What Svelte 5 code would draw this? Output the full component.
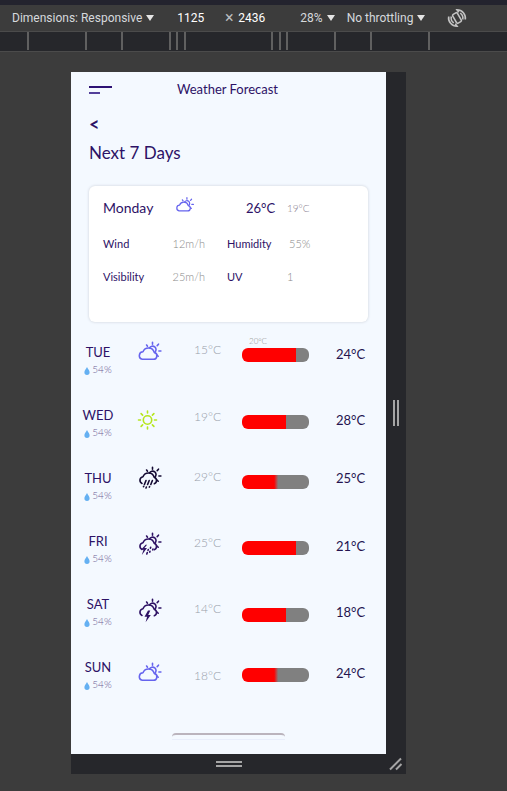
<script>
  const ticks = [27, 85, 121, 169, 176, 184, 271, 279, 286, 334, 370, 428];

  const days = [
    { name: 'TUE', rain: '54%', icon: 'cloud', low: '15°C', high: '24°C', fill: 81, soft: 0, note: '20°C' },
    { name: 'WED', rain: '54%', icon: 'sun', low: '19°C', high: '28°C', fill: 65, soft: 0 },
    { name: 'THU', rain: '54%', icon: 'rain', low: '29°C', high: '25°C', fill: 48, soft: 6 },
    { name: 'FRI', rain: '54%', icon: 'storm', low: '25°C', high: '21°C', fill: 81, soft: 0 },
    { name: 'SAT', rain: '54%', icon: 'bolt', low: '14°C', high: '18°C', fill: 65, soft: 0 },
    { name: 'SUN', rain: '54%', icon: 'cloud', low: '18°C', high: '24°C', fill: 48, soft: 6 }
  ];
</script>

{#snippet weather(kind)}
  <svg class="weather {kind}" viewBox="0 0 26 26" aria-hidden="true">
    {#if kind === 'sun'}
      <circle cx="10.5" cy="13" r="4.2" />
      <path d="M10.5 4v2M10.5 20v2M1.5 13h2M17.5 13h2M4.1 6.6l1.5 1.5M15.4 17.9l1.5 1.5M4.1 19.4l1.5-1.5M15.4 8.1l1.5-1.5" />
    {:else}
      <path d="M15.5 2.2v2M9.6 5l.9 1.2M20.2 5.6l1.3-1.4M21.9 11h2M20.2 15.2l1 1" />
      <path d="M12.5 7.9a3.5 3.5 0 1 1 5.3 4.4" />
      {#if kind === 'cloud'}
        <path d="M5.3 19.3H16.2a3.5 3.5 0 0 0 1-6.9a5.9 5.9 0 0 0-11.2-.6a3.8 3.8 0 0 0-.7 7.5z" />
      {:else}
        <path d="M5 18.5a3.6 3.6 0 0 1 1-6.8a5.9 5.9 0 0 1 11.2.6a3.4 3.4 0 0 1 .1 6.4" />
        {#if kind === 'rain'}
          <path d="M9 15.5l-1.6 4M12.2 15.5l-1.6 4M15.4 15.5l-1.6 4M9.4 22l-.4 1M6.7 21.3l-.2.4M12.6 21.6l-.3.5" />
        {:else if kind === 'storm'}
          <path class="solid" d="M8.6 13.700l-4.600 5h2.500l-1.700 5.300 5.200-7H7.400l2.700-3.300z" />
          <path d="M11.3 18.5l-.3.8M10.3 21.6l-.5 1.4M13.7 16.3l-.3.8M13 20.3l-.3.8M16 18l-.3.8" />
        {:else}
          <path class="solid" d="M11 13.500l-3.500 6.300h2.600l-1.500 5.500 5.200-7.300h-2.600l2.100-4.500z" />
        {/if}
      {/if}
    {/if}
  </svg>
{/snippet}

<div class="devtools">
  <header class="toolbar">
    <button class="dim">Dimensions: Responsive<i class="caret"></i></button>
    <input class="size first" aria-label="Width" value="1125" />
    <span class="times">×</span>
    <input class="size" aria-label="Height" value="2436" />
    <button class="zoom">28%<i class="caret"></i></button>
    <button class="throttle">No throttling<i class="caret"></i></button>
    <button class="rotate" aria-label="Rotate">
      <svg viewBox="0 0 20 20" width="20" height="20">
        <g fill="none" stroke="currentColor" stroke-width="1.6">
          <rect x="7.3" y="5" width="5.4" height="10" rx="1.2" transform="rotate(-30 10 10)" />
          <path d="M1.7 8.5a8.5 8.5 0 0 0 8.3 9.8l-1.8-2.5M18.3 11.5A8.5 8.5 0 0 0 10 1.7l1.8 2.5M4.3 8.5a6 6 0 0 0 2.5 6.4M15.7 11.5a6 6 0 0 0-2.5-6.4" />
        </g>
      </svg>
    </button>
  </header>
  <svg class="ruler" height="21" aria-hidden="true">
    {#each ticks as x}
      <rect {x} y="0" width="2" height="18" />
    {/each}
  </svg>

  <main class="stage">
    <div class="frame">
      <div class="phone">
        <div class="bar-top">
          <button class="menu" aria-label="Menu"><span></span><span></span></button>
          <h1>Weather Forecast</h1>
        </div>
        <a class="back" href="#back" aria-label="Back">&lt;</a>
        <h2>Next 7 Days</h2>

        <section class="card">
          <div class="today">
            <strong>Monday</strong>
            {@render weather('cloud')}
            <strong class="max">26°C</strong>
            <span class="min">19°C</span>
          </div>
          <dl>
            <dt>Wind</dt><dd class="right">12m/h</dd>
            <dt>Humidity</dt><dd class="pct">55%</dd>
            <dt>Visibility</dt><dd class="right">25m/h</dd>
            <dt>UV</dt><dd>1</dd>
          </dl>
        </section>

        <section class="week">
          <div class="names">
            {#each days as d}
              <div class="day">
                <b>{d.name}</b>
                <span class="wet">
                  <svg viewBox="0 0 6 8" width="6" height="8"><path d="M3 0C4 2 5.6 3.6 5.6 5.3a2.6 2.6 0 0 1-5.2 0C.4 3.6 2 2 3 0z" fill="#64b0f2" /></svg>{d.rain}
                </span>
              </div>
            {/each}
          </div>
          <div class="column icons">
            {#each days as d}{@render weather(d.icon)}{/each}
          </div>
          <div class="column lows">
            {#each days as d}<span>{d.low}</span>{/each}
          </div>
          <div class="column bars">
            {#each days as d}
              <div>
                {#if d.note}<small>{d.note}</small>{/if}
                <div class="bar" style="--from: {d.fill}%; --to: {d.fill + d.soft}%"></div>
              </div>
            {/each}
          </div>
          <div class="column highs">
            {#each days as d}<span>{d.high}</span>{/each}
          </div>
        </section>

        <div class="sheet"></div>
      </div>
      <div class="grip side"><i></i><i></i></div>
      <div class="grip bottom"><i></i><i></i></div>
      <div class="corner">
        <svg viewBox="0 0 14 14" width="14" height="14"><path d="M1 12.500L12 1.500M7 12.500L12.500 7" stroke="#a5a5a5" stroke-width="2" fill="none" /></svg>
      </div>
    </div>
  </main>
</div>

<style>
  :global(body) { margin: 0; background: #3c3c3c; }
  * { box-sizing: border-box; }
  button, input { font: inherit; color: inherit; background: none; border: 0; padding: 0; margin: 0; }

  .devtools { min-height: 100vh; background: #3c3c3c; border-top: 5px solid #23232e; }
  .toolbar {
    display: flex; align-items: center; height: 26px; padding-left: 12px;
    font: 12px/16px Roboto, sans-serif; color: #d6d9dc; white-space: nowrap;
  }
  .toolbar button { display: flex; align-items: center; gap: 4px; }
  .caret { border: 4px solid transparent; border-top: 6px solid #e4e4e4; border-bottom: 0; }
  .size { width: 36px; color: #fff; }
  .first { margin-left: 23px; }
  .times { width: 12px; margin: 0 3px 0 10px; font-size: 16px; text-align: center; color: #b9bcbf; }
  .zoom { margin-left: 26px; }
  .throttle { margin-left: 12px; }
  .rotate { margin-left: 22px; color: #c4c4c4; }
  .ruler { display: block; width: 100%; background: #26272b; border-top: 1px solid #4b4b4b; border-bottom: 1px solid #4b4b4b; }
  .ruler rect { fill: #606060; }

  .stage { padding: 20px 101px 17px 71px; }
  .frame {
    display: grid; grid-template-columns: 1fr 20px; grid-template-rows: auto 20px;
    background: #26272b;
  }
  .phone {
    display: flex; flex-direction: column; padding: 8px 18px 14px;
    background: #f4f9ff; color: #2d1266; font: 300 13px/18px Lato, sans-serif;
  }
  .grip { display: flex; align-items: center; justify-content: center; gap: 2px; }
  .side i { width: 2px; height: 26px; background: #a5a5a5; }
  .bottom { flex-direction: column; }
  .bottom i { width: 26px; height: 2px; background: #a5a5a5; }
  .corner { display: flex; align-items: center; justify-content: center; }

  .bar-top { display: flex; align-items: center; justify-content: space-between; }
  .menu { display: flex; flex-direction: column; gap: 4px; padding-top: 2px; }
  .menu span { width: 23px; height: 2px; background: #53409a; }
  .menu span:first-child { background: #2e1274; }
  .menu span + span { width: 11px; }
  h1, h2 { margin: 0; font-weight: 400; }
  h1 { flex: 1; margin-left: 65px; font-size: 13px; line-height: 18px; }
  .back { align-self: flex-start; margin-top: 16px; font-size: 18px; line-height: 20px; font-weight: 700; color: inherit; text-decoration: none; }
  h2 { margin-top: 7px; font-size: 17px; line-height: 24px; }

  .card {
    height: 136px; margin-top: 21px; padding: 10px 14px;
    background: #fff; border-radius: 6px; box-shadow: 0 0 3px #c9ced6;
  }
  .today { display: grid; grid-template-columns: 72px 71px 41px auto; align-items: center; height: 24px; }
  .card strong { font-size: 14px; font-weight: 400; }
  .card .max { font-size: 13px; }
  .today .weather { width: 20px; height: 20px; margin-top: -4px; }
  .min { font-size: 10px; color: #8a8090; }
  dl {
    display: grid; grid-template-columns: 60px 42px 22px 41px 19px 1fr; row-gap: 15px;
    margin: 15px 0 0; font-size: 11px;
  }
  dt { font-size: 11px; font-weight: 400; }
  dt:nth-of-type(odd) { grid-column: 1; }
  dt:nth-of-type(even) { grid-column: 4; }
  dd { margin: 0; grid-column: 6; color: #8a8a8a; }
  .right { grid-column: 2; text-align: right; }
  .pct { padding-left: 2px; }

  .week {
    display: grid; grid-template-columns: 38px 16px 61px 48px 94px 1fr;
    margin: 19px -10px 0;
  }
  .names { grid-column: 1; display: flex; flex-direction: column; gap: 27px; text-align: center; padding-top: 3px; }
  .day { height: 36px; display: flex; flex-direction: column; align-items: center; }
  .day b { font-size: 13px; line-height: 17px; font-weight: 400; white-space: nowrap; }
  .wet { display: flex; align-items: center; gap: 2px; font-size: 10px; line-height: 16px; color: #6d5c94; }
  .wet svg { margin-top: 3px; }
  .column { display: grid; align-items: start; }
  .icons { grid-column: 2 / 4; grid-template-rows: 67px 58px 66px 66px 64px auto; padding-left: 20px; margin-top: -1px; }
  .lows { grid-column: 4; grid-template-rows: 67px 60px 66px 66px 67px auto; font-size: 12px; color: #98a0aa; }
  .bars { grid-column: 5; grid-template-rows: 67px 60px 66px 67px 60px auto; padding-top: 1px; }
  .highs { grid-column: 6; grid-template-rows: 66px 58px 68px 66px 61px auto; padding-top: 4px; font-size: 13px; font-weight: 400; color: #24144f; }
  .bars > div { display: flex; flex-direction: column; justify-content: flex-end; height: 20px; }
  .bars small { padding-left: 7px; font-size: 8px; line-height: 14px; color: #8c8c8c; }
  .bar {
    flex: none; width: 67px; height: 14px; border-radius: 6px;
    background: linear-gradient(90deg, #f00 var(--from), #808080 var(--to));
  }

  .weather { display: block; width: 26px; height: 26px; fill: none; stroke: #6664ee; stroke-width: 1.6; stroke-linecap: round; stroke-linejoin: round; }
  .weather.sun { stroke: #b5e61d; }
  .weather.rain { stroke: #150b33; }
  .weather.storm, .weather.bolt { stroke: #2e1264; }
  .solid { fill: #2e1264; stroke-width: 0; }

  .sheet {
    align-self: center; width: 113px; height: 7px; margin-top: 38px;
    border-top: 2px solid #bbb4bd; border-bottom: 1px solid #e9eefb; border-radius: 4px 4px 0 0;
  }
</style>
